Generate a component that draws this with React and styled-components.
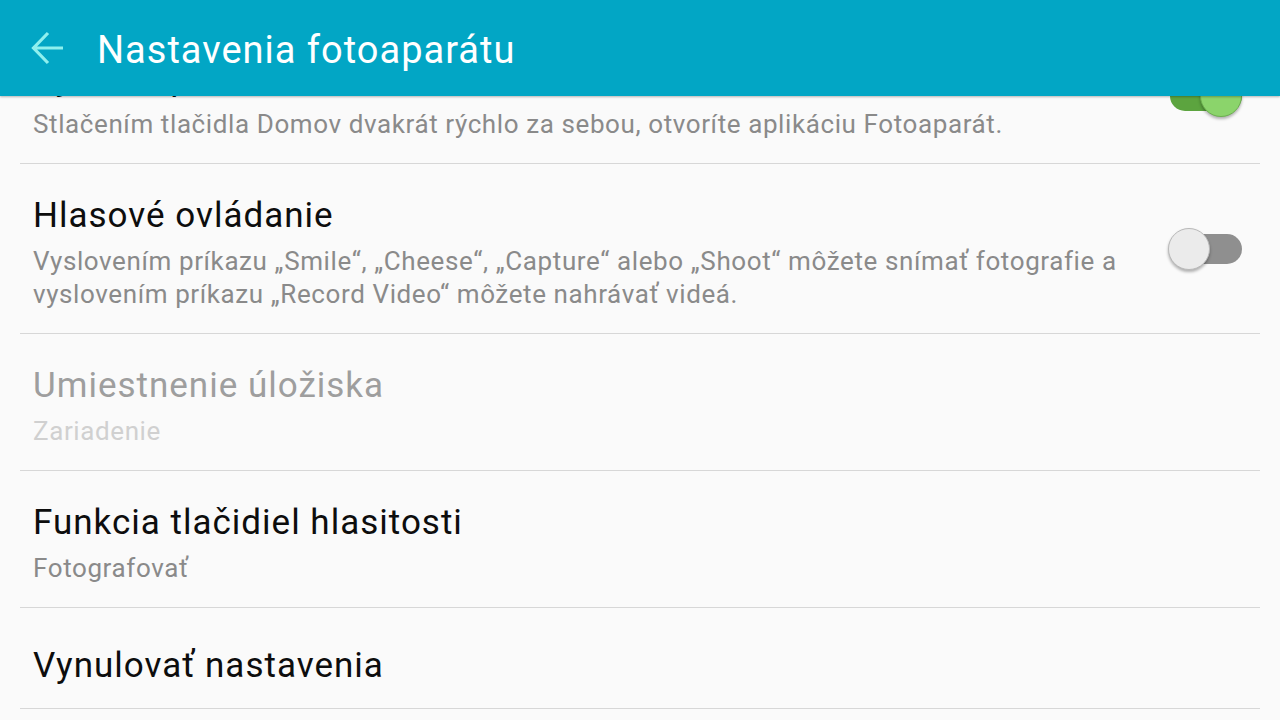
import React, { useLayoutEffect, useRef } from "react";
import styled, { createGlobalStyle } from "styled-components";

const GlobalStyle = createGlobalStyle`
  html, body {
    margin: 0;
    padding: 0;
    background: #fafafa;
  }
  body {
    font-family: Roboto, "Noto Sans", "DejaVu Sans", sans-serif;
    -webkit-font-smoothing: antialiased;
  }
`;

const Screen = styled.div`
  display: flex;
  flex-direction: column;
  height: 100vh;
  background: #fafafa;
  overflow: hidden;
`;

const AppBar = styled.header`
  flex: 0 0 96px;
  display: flex;
  align-items: center;
  gap: 31px;
  padding: 3px 0 0 30px;
  box-sizing: border-box;
  background: #02a6c5;
  box-shadow: 0 1px 2px rgba(0, 0, 0, 0.28);
  position: relative;
  z-index: 1;
`;

const BackButton = styled.button`
  display: flex;
  align-items: center;
  justify-content: center;
  width: 36px;
  height: 36px;
  padding: 0;
  margin-top: -3px;
  border: 0;
  background: transparent;
  cursor: pointer;
`;

const BarTitle = styled.h1`
  margin: 0;
  font-size: 38px;
  font-weight: 400;
  letter-spacing: 1px;
  line-height: 44px;
  color: #ffffff;
`;

const Scroller = styled.div`
  flex: 1;
  overflow-y: auto;
  scrollbar-width: none;
  padding: 0 20px 40px;
  &::-webkit-scrollbar {
    display: none;
  }
`;

const Row = styled.div`
  display: flex;
  align-items: center;
  gap: 40px;
  padding: 23px 18px 22px 13px;
  border-bottom: 1px solid #d7d7d7;
`;

const TextBlock = styled.div`
  flex: 1;
  min-width: 0;
  padding-top: ${(p) => (p.$single ? "15px" : "9px")};
`;

const Title = styled.div`
  font-size: 35px;
  letter-spacing: 1px;
  line-height: 40px;
  color: ${(p) => (p.$disabled ? "#9e9e9e" : "#0d0d0d")};
`;

const Summary = styled.div`
  margin-top: 9px;
  font-size: 26px;
  letter-spacing: 0.6px;
  line-height: 33px;
  color: ${(p) => (p.$disabled ? "#d0d0d0" : "#8a8a8a")};
`;

const SwitchBox = styled.span`
  position: relative;
  display: block;
  flex: 0 0 74px;
  width: 74px;
  height: 42px;
`;

const Track = styled.span`
  position: absolute;
  left: 2px;
  right: 0;
  top: 6px;
  height: 30px;
  border-radius: 15px;
  background: ${(p) => (p.$on ? "#5ca43f" : "#8f8f8f")};
`;

const Thumb = styled.span`
  position: absolute;
  top: 0;
  left: ${(p) => (p.$on ? "32px" : "0")};
  width: 42px;
  height: 42px;
  box-sizing: border-box;
  border-radius: 50%;
  background: ${(p) => (p.$on ? "#8bd46b" : "#ebebeb")};
  border: 1px solid ${(p) => (p.$on ? "#6cb04f" : "#b9b9b9")};
  box-shadow: 0 2px 3px rgba(0, 0, 0, 0.3);
`;

function Switch({ on }) {
  return (
    <SwitchBox role="switch" aria-checked={on}>
      <Track $on={on} />
      <Thumb $on={on} />
    </SwitchBox>
  );
}

function BackArrow() {
  return (
    <svg width="36" height="36" viewBox="0 0 36 36" fill="none">
      <path
        d="M33 18 H4 M18 3 L3.5 18 L18 33"
        stroke="#8ff0ee"
        strokeWidth="3.2"
        strokeLinecap="butt"
        strokeLinejoin="miter"
      />
    </svg>
  );
}

const items = [
  {
    title: "Rýchle spustenie",
    summary:
      "Stlačením tlačidla Domov dvakrát rýchlo za sebou, otvoríte aplikáciu Fotoaparát.",
    toggle: true,
    on: true,
  },
  {
    title: "Hlasové ovládanie",
    summary:
      "Vyslovením príkazu „Smile“, „Cheese“, „Capture“ alebo „Shoot“ môžete snímať fotografie a vyslovením príkazu „Record Video“ môžete nahrávať videá.",
    toggle: true,
    on: false,
  },
  {
    title: "Umiestnenie úložiska",
    summary: "Zariadenie",
    disabled: true,
  },
  {
    title: "Funkcia tlačidiel hlasitosti",
    summary: "Fotografovať",
  },
  {
    title: "Vynulovať nastavenia",
  },
];

export default function App() {
  const scrollRef = useRef(null);

  useLayoutEffect(() => {
    if (scrollRef.current) scrollRef.current.scrollTop = 69;
  }, []);

  return (
    <>
      <GlobalStyle />
      <Screen>
        <AppBar>
          <BackButton aria-label="Späť">
            <BackArrow />
          </BackButton>
          <BarTitle>Nastavenia fotoaparátu</BarTitle>
        </AppBar>
        <Scroller ref={scrollRef}>
          {items.map((it) => (
            <Row key={it.title}>
              <TextBlock $single={!it.summary}>
                <Title $disabled={it.disabled}>{it.title}</Title>
                {it.summary && (
                  <Summary $disabled={it.disabled}>{it.summary}</Summary>
                )}
              </TextBlock>
              {it.toggle && <Switch on={it.on} />}
            </Row>
          ))}
        </Scroller>
      </Screen>
    </>
  );
}
